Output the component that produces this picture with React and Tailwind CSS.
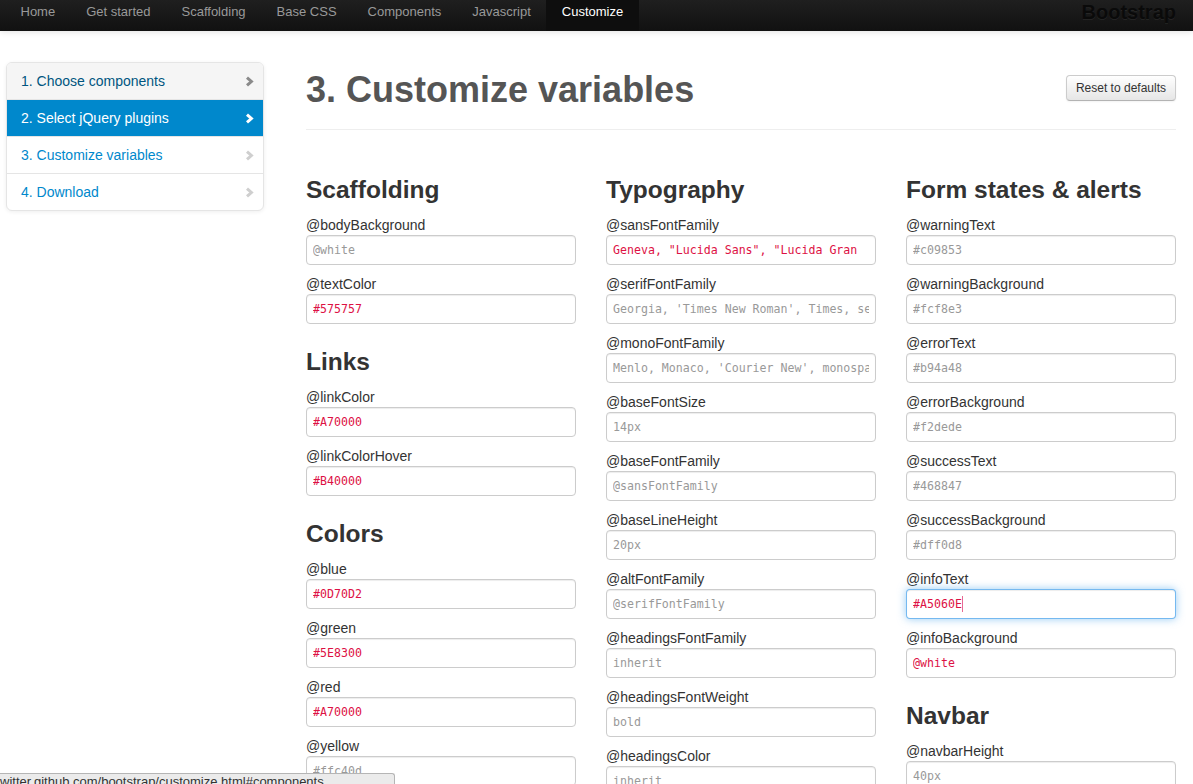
import clsx from 'clsx';

// Barra superior
const NAV = ['Home', 'Get started', 'Scaffolding', 'Base CSS', 'Components', 'Javascript', 'Customize'];

const STEPS = [
  { label: '1. Choose components', state: 'hover' },
  { label: '2. Select jQuery plugins', state: 'active' },
  { label: '3. Customize variables', state: 'idle' },
  { label: '4. Download', state: 'idle' },
];

// [label, value, isSet, focused]
const COLUMNS = [
  [
    { title: 'Scaffolding', items: [['@bodyBackground', '@white'], ['@textColor', '#575757', true]] },
    { title: 'Links', items: [['@linkColor', '#A70000', true], ['@linkColorHover', '#B40000', true]] },
    {
      title: 'Colors',
      items: [
        ['@blue', '#0D70D2', true],
        ['@green', '#5E8300', true],
        ['@red', '#A70000', true],
        ['@yellow', '#ffc40d'],
      ],
    },
  ],
  [
    {
      title: 'Typography',
      items: [
        ['@sansFontFamily', 'Geneva, "Lucida Sans", "Lucida Gran', true],
        ['@serifFontFamily', "Georgia, 'Times New Roman', Times, serif"],
        ['@monoFontFamily', "Menlo, Monaco, 'Courier New', monospace"],
        ['@baseFontSize', '14px'],
        ['@baseFontFamily', '@sansFontFamily'],
        ['@baseLineHeight', '20px'],
        ['@altFontFamily', '@serifFontFamily'],
        ['@headingsFontFamily', 'inherit'],
        ['@headingsFontWeight', 'bold'],
        ['@headingsColor', 'inherit'],
      ],
    },
  ],
  [
    {
      title: 'Form states & alerts',
      items: [
        ['@warningText', '#c09853'],
        ['@warningBackground', '#fcf8e3'],
        ['@errorText', '#b94a48'],
        ['@errorBackground', '#f2dede'],
        ['@successText', '#468847'],
        ['@successBackground', '#dff0d8'],
        ['@infoText', '#A5060E', true, true],
        ['@infoBackground', '@white', true],
      ],
    },
    { title: 'Navbar', items: [['@navbarHeight', '40px']] },
  ],
];

function Chevron({ color }) {
  return (
    <svg width="9" height="11" viewBox="0 0 9 11" className="shrink-0">
      <polyline points="2,1.6 6.4,5.5 2,9.4" fill="none" stroke={color} strokeWidth="3" strokeLinejoin="miter" />
    </svg>
  );
}

function Field({ label, value, set, focus }) {
  return (
    <div>
      <label className="block h-5 leading-5 text-[14px] text-[#333]">{label}</label>
      <div className="relative mb-[9px] h-[30px] w-[270px]">
        <input
          readOnly
          defaultValue={set ? value : ''}
          placeholder={set ? '' : value}
          className={clsx(
            "block h-[30px] w-full rounded-[4px] border bg-white px-[6px] font-['DejaVu_Sans_Mono',monospace] text-[11.6px] outline-none",
            focus
              ? 'border-[rgba(82,168,236,0.8)] shadow-[inset_0_1px_1px_rgba(0,0,0,0.075),0_0_8px_rgba(82,168,236,0.6)]'
              : 'border-[#ccc] shadow-[inset_0_1px_1px_rgba(0,0,0,0.075)]',
            set ? 'text-[#dd1144]' : 'placeholder:text-[#999]'
          )}
        />
        {focus && <span className="absolute left-[56px] top-[7px] h-4 w-px bg-[#e86a92]" />}
      </div>
    </div>
  );
}

export default function App() {
  return (
    <div className="relative h-[784px] overflow-hidden bg-white font-['Liberation_Sans',Arial,sans-serif]">
      <header className="flex h-[31px] items-start justify-between bg-linear-to-b from-[#1f1f1f] to-[#111] pl-[5px] pr-[17px] shadow-[0_1px_6px_rgba(0,0,0,0.12)]">
        <nav className="flex h-full">
          {NAV.map((item) => (
            <a
              key={item}
              className={clsx(
                'h-full px-[15.5px] pt-[2px] text-[13px] leading-5',
                item === 'Customize' ? 'bg-[#0e0e0e] text-white' : 'text-[#999]'
              )}
            >
              {item}
            </a>
          ))}
        </nav>
        <span className="pt-[1px] text-[20px] font-bold leading-[22px] text-[#0a0a0a] [text-shadow:0_1px_0_rgba(255,255,255,0.08)]">
          Bootstrap
        </span>
      </header>

      <div className="flex pl-[6px] pt-[31px]">
        <aside className="w-[258px] shrink-0">
          <ul className="overflow-hidden rounded-[6px] border border-[#e5e5e5] bg-white shadow-[0_1px_4px_rgba(0,0,0,0.065)]">
            {STEPS.map((step, i) => (
              <li
                key={step.label}
                className={clsx(
                  'flex items-center justify-between pl-[14px] pr-[9px] text-[14px]',
                  i > 0 ? 'h-[37px] border-t border-[#e5e5e5]' : 'h-[36px]',
                  step.state === 'hover' && 'bg-[#f5f5f5] text-[#005580]',
                  step.state === 'active' && 'border-[#0088cc] bg-[#0088cc] text-white',
                  step.state === 'idle' && 'text-[#0088cc]'
                )}
              >
                <span>{step.label}</span>
                <Chevron color={step.state === 'active' ? '#fff' : step.state === 'hover' ? '#8a8a8a' : '#cfcfcf'} />
              </li>
            ))}
          </ul>
        </aside>

        <main className="ml-[42px] w-[870px]">
          <div className="flex items-start justify-between border-b border-[#eee] pb-[19px]">
            <h1 className="mt-[8px] text-[36px] font-bold leading-[40px] text-[#555]">3. Customize variables</h1>
            <button className="mt-[13px] h-[26px] rounded-[4px] border border-[#ccc] border-b-[#b3b3b3] bg-linear-to-b from-white to-[#e6e6e6] px-[9px] text-[12px] text-[#333] shadow-[inset_0_1px_0_rgba(255,255,255,0.2),0_1px_2px_rgba(0,0,0,0.05)]">
              Reset to defaults
            </button>
          </div>

          <div className="mt-[31px] grid grid-cols-3 gap-[30px]">
            {COLUMNS.map((sections, c) => (
              <div key={c} className="flex flex-col">
                {sections.map((sec) => (
                  <section key={sec.title} className="flex flex-col">
                    <h3 className="mb-[5px] mt-[9px] h-10 text-[24.5px] font-bold leading-10 text-[#333]">{sec.title}</h3>
                    {sec.items.map(([label, value, set, focus]) => (
                      <Field key={label} label={label} value={value} set={set} focus={focus} />
                    ))}
                  </section>
                ))}
              </div>
            ))}
          </div>
        </main>
      </div>

      <div className="absolute bottom-0 left-0 h-[11px] w-[395px] overflow-hidden whitespace-nowrap rounded-tr-[3px] border-r border-t border-[#b5b5b5] bg-[#ebebeb] text-[13px] leading-4 text-[#333]">
        witter.github.com/bootstrap/customize.html#components
      </div>
    </div>
  );
}
